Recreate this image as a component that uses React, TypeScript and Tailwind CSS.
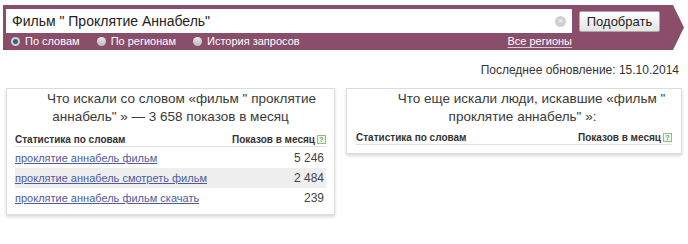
type Row = { phrase: string; count: string };

const rows: Row[] = [
  { phrase: "проклятие аннабель фильм", count: "5 246" },
  { phrase: "проклятие аннабель смотреть фильм", count: "2 484" },
  { phrase: "проклятие аннабель фильм скачать", count: "239" },
];

function Radio({ checked, label }: { checked?: boolean; label: string }) {
  return (
    <label className="flex items-center gap-[5px]">
      {checked ? (
        <span className="flex h-[9px] w-[9px] items-center justify-center rounded-full bg-[#c9d3dc]">
          <span className="h-[5px] w-[5px] rounded-full bg-[#3d5f7e]" />
        </span>
      ) : (
        <span className="h-[9px] w-[9px] rounded-full bg-gradient-to-b from-[#e6e6e6] to-[#bdbdbd]" />
      )}
      <span>{label}</span>
    </label>
  );
}

function SearchBand() {
  return (
    <div className="ml-[3px] mt-[5px] h-[45px] w-[681px] bg-[#8b4e6a] pl-[3px] pt-[4px] [clip-path:polygon(0_0,670px_0,681px_50%,670px_100%,0_100%)]">
      <div className="flex items-center gap-[7px]">
        <div className="flex h-[24px] w-[566px] items-center bg-white pl-[6px] pr-[6px]">
          <span className="flex-1 text-[14px] text-[#222]">Фильм " Проклятие Аннабель"</span>
          <span className="flex h-[11px] w-[11px] items-center justify-center rounded-full bg-[#d0d0d0] text-[8px] leading-none text-white">
            ×
          </span>
        </div>
        <button className="h-[21px] w-[81px] rounded-[2px] border border-[#a9a9a9] bg-gradient-to-b from-white to-[#e4e4e4] text-[13px] text-[#222]">
          Подобрать
        </button>
      </div>
      <div className="flex h-[17px] w-[566px] items-center pl-[5px] text-[11px] text-white">
        <div className="flex gap-[17px]">
          <Radio checked label="По словам" />
          <Radio label="По регионам" />
          <Radio label="История запросов" />
        </div>
        <a className="ml-auto underline decoration-[#d9c3cd] underline-offset-2">Все регионы</a>
      </div>
    </div>
  );
}

function HelpIcon() {
  return (
    <span className="ml-[2px] inline-flex h-[9px] w-[9px] items-center justify-center border border-[#8fbf7f] bg-[#eef7ea] text-[7px] leading-none text-[#6aa25a]">
      ?
    </span>
  );
}

function TableHeader() {
  return (
    <div className="flex h-[14px] items-center justify-between border-b border-[#e2e2e2] text-[10px] font-bold text-[#333]">
      <span>Статистика по словам</span>
      <span className="flex items-center">
        Показов в месяц
        <HelpIcon />
      </span>
    </div>
  );
}

function Card({
  lines,
  children,
  className,
}: {
  lines: { text: string; indent: string }[];
  children?: React.ReactNode;
  className: string;
}) {
  return (
    <section
      className={`border border-[#dcdcdc] bg-white shadow-[0_2px_3px_rgba(0,0,0,0.15)] ${className}`}
    >
      <h2 className="pt-[1px] text-center text-[13.5px] leading-[18px] text-[#3a3a3a]">
        {lines.map((l) => (
          <span key={l.text} className={`block ${l.indent}`}>
            {l.text}
          </span>
        ))}
      </h2>
      {children}
    </section>
  );
}

export default function App() {
  return (
    <div className="h-[244px] w-[688px] bg-white font-['Liberation_Sans',Arial,sans-serif] text-[#333]">
      <SearchBand />
      <p className="mt-[13px] pr-[9px] text-right text-[12px] leading-[14px] text-[#333]">
        Последнее обновление: 15.10.2014
      </p>
      <div className="mt-[11px] flex items-start gap-[11px] pl-[6px]">
        <Card
          className="w-[329px] px-[8px] pb-[6px]"
          lines={[
            { text: "Что искали со словом «фильм \" проклятие", indent: "pl-[22px]" },
            { text: "аннабель\" » — 3 658 показов в месяц", indent: "" },
          ]}
        >
          <div className="mt-[7px]">
            <TableHeader />
          </div>
          <div className="mt-[1px]">
            {rows.map((r, i) => (
              <div
                key={r.phrase}
                className={`flex h-[20px] items-center justify-between pr-[2px] text-[11px] ${
                  i === 1 ? "bg-[#eeeeee]" : ""
                }`}
              >
                <a className="text-[#4f5c9c] underline underline-offset-1">{r.phrase}</a>
                <span className="text-[12px] text-[#444]">{r.count}</span>
              </div>
            ))}
          </div>
        </Card>
        <Card
          className="w-[336px] px-[9px] pb-[8px]"
          lines={[
            { text: "Что еще искали люди, искавшие «фильм \"", indent: "pl-[35px]" },
            { text: "проклятие аннабель\" »:", indent: "pl-[17px]" },
          ]}
        >
          <div className="mt-[5px]">
            <TableHeader />
          </div>
        </Card>
      </div>
    </div>
  );
}
